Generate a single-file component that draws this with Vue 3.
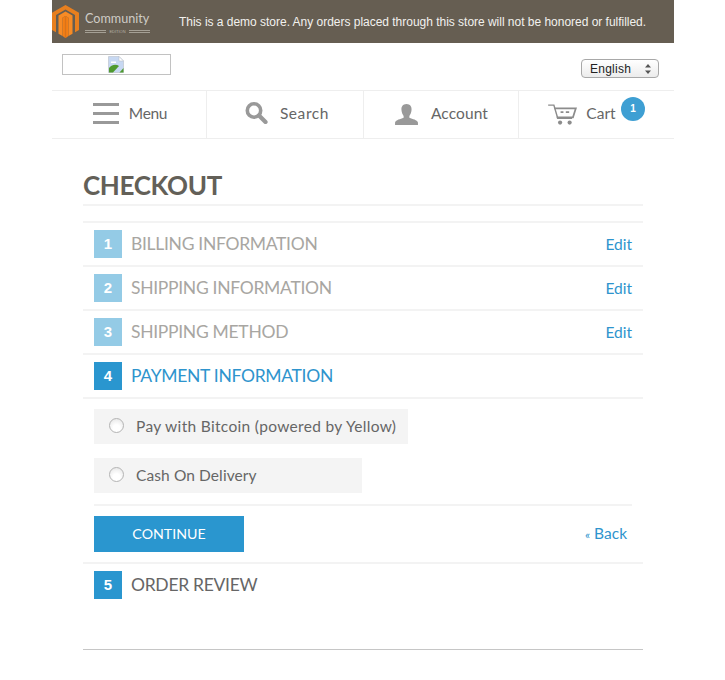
<script setup>
const steps = [
  { n: 1, label: 'BILLING INFORMATION', state: 'done' },
  { n: 2, label: 'SHIPPING INFORMATION', state: 'done' },
  { n: 3, label: 'SHIPPING METHOD', state: 'done' },
  { n: 4, label: 'PAYMENT INFORMATION', state: 'active' }
]
const methods = [
  { label: 'Pay with Bitcoin (powered by Yellow)', cls: 'wide' },
  { label: 'Cash On Delivery', cls: 'narrow' }
]
</script>

<template>
  <div class="page">
    <div class="demo">
      <div class="logo">
        <svg class="mark" width="27" height="33" viewBox="0 0 27 33">
          <path d="M13.500 0 L27 7.800 V25 L23 27.300 V10 L13.500 4.500 L4 10 V27.300 L0 25 V7.800 Z" fill="#e87f1e" />
          <path d="M13.500 6.500 L20.500 10.600 V28.800 L16.500 31 V12.800 L13.500 11 L10.500 12.800 V31 L6.500 28.800 V10.600 Z" fill="#f78b25" />
          <path d="M10.500 12.800 V31 L13.500 33 L16.500 31 V12.800 L13.500 11 Z" fill="#f47f14" />
          <path d="M12.800 11.500 h1.400 V33 h-1.400 Z" fill="#d9731a" />
        </svg>
        <div class="logo-text">
          <div class="community">Community</div>
          <div class="edition"><i></i><span>EDITION</span><i></i></div>
        </div>
      </div>
      <p class="notice">This is a demo store. Any orders placed through this store will not be honored or fulfilled.</p>
    </div>

    <div class="top">
      <div class="broken">
        <svg width="16" height="17" viewBox="0 0 16 17">
          <path d="M.5.5 H11 L15.500 5 V16.500 H.5 Z" fill="#c7d8f2" stroke="#b9bfc9" stroke-width=".6" />
          <path d="M11 .5 V5 H15.500 Z" fill="#fff" stroke="#b9bfc9" stroke-width=".6" />
          <path d="M1 16.500 V12 C4 8.500 8 8 11 10 L5 16.500 Z" fill="#4f9a2f" />
          <path d="M11.500 16.500 L15.500 12 V16.500 Z" fill="#4f9a2f" />
          <path d="M3 5.500 h5 v1.500 h-5 z" fill="#fff" />
        </svg>
      </div>
      <div class="lang">
        <span>English</span>
        <svg width="6" height="10" viewBox="0 0 6 10"><path d="M3 0 L6 3.500 H0 Z M3 10 L0 6.500 H6 Z" fill="#555" /></svg>
      </div>
    </div>

    <nav class="nav">
      <a class="cell c1">
        <span class="burger"><i></i><i></i><i></i></span>
        <span>Menu</span>
      </a>
      <a class="cell c2">
        <svg width="23" height="22" viewBox="0 0 23 22">
          <circle cx="9" cy="8.500" r="6.700" fill="none" stroke="#999" stroke-width="3.600" />
          <path d="M14 13.500 L20.500 20" stroke="#999" stroke-width="4.200" stroke-linecap="round" />
        </svg>
        <span>Search</span>
      </a>
      <a class="cell c3">
        <svg class="person" width="25" height="21" viewBox="0 0 25 22">
          <path d="M12.500 0 C16.500 0 18 3 17.800 6 C17.600 9 16.500 11 15.500 12.500 V14.500 C19 16 23.500 16.500 24.500 19.500 V22 H.5 V19.500 C1.500 16.500 6 16 9.500 14.500 V12.500 C8.500 11 7.400 9 7.200 6 C7 3 8.500 0 12.500 0 Z" fill="#999" />
        </svg>
        <span>Account</span>
      </a>
      <a class="cell c4">
        <svg class="cart" width="30" height="21" viewBox="0 0 30 22">
          <path d="M.5 1.200 H6.500 L10.500 15 H25.500" fill="none" stroke="#8c8c8c" stroke-width="1.500" />
          <path d="M7 4.500 H29.500 L26.500 14 H9.500" fill="none" stroke="#8c8c8c" stroke-width="1.800" />
          <path d="M13.500 8.500 h3 M19 8.500 h3.500" stroke="#8c8c8c" stroke-width="1.800" />
          <circle cx="13" cy="19.500" r="2.200" fill="#8c8c8c" />
          <circle cx="23" cy="19.500" r="2.200" fill="#8c8c8c" />
        </svg>
        <span>Cart</span>
        <b class="count">1</b>
      </a>
    </nav>

    <main class="main">
      <h1 class="title">CHECKOUT</h1>
      <ol class="steps">
        <li v-for="s in steps" :key="s.n" class="step" :class="s.state">
          <span class="num">{{ s.n }}</span>
          <span class="label">{{ s.label }}</span>
          <a v-if="s.state === 'done'" class="edit">Edit</a>
        </li>
      </ol>

      <div class="methods">
        <label v-for="m in methods" :key="m.label" class="method" :class="m.cls">
          <span class="radio"></span>
          <span>{{ m.label }}</span>
        </label>
      </div>

      <div class="actions">
        <button class="continue" type="button">CONTINUE</button>
        <a class="back"><small>«</small> Back</a>
      </div>

      <div class="step last">
        <span class="num">5</span>
        <span class="label">ORDER REVIEW</span>
      </div>

      <div class="foot"></div>
    </main>
  </div>
</template>

<style>
html, body { margin: 0; background: #fff; }
</style>

<style scoped>
.page {
  width: 622px;
  margin-left: 52px;
  height: 680px;
  overflow: hidden;
  font-family: Lato, "Open Sans", sans-serif;
  color: #636363;
}
.demo {
  height: 43px;
  background: #665e52;
  display: flex;
  align-items: center;
  color: #f2f1ee;
}
.logo { display: flex; align-items: center; width: 127px; flex: none; }
.mark { flex: none; }
.logo-text { margin-left: 6px; width: 65px; margin-top: 1px; }
.community {
  font: 12.600px/16px Lato, sans-serif;
  color: #cfccc6;
}
.edition {
  display: flex;
  align-items: center;
  gap: 3px;
  font: 4px/5px "Liberation Sans", sans-serif;
  color: #b5b1a8;
  margin-top: 2px;
}
.edition i { flex: 1; height: 3px; border-top: 1px solid #a5a095; border-bottom: 1px solid #a5a095; box-sizing: border-box; }
.notice {
  margin: 0;
  font: 12px/14px "Liberation Sans", Arial, sans-serif;
  letter-spacing: -.02px;
  white-space: nowrap;
}
.top {
  height: 47px;
  box-sizing: border-box;
  padding: 11px 15px 0 10px;
  display: flex;
  justify-content: space-between;
  align-items: flex-start;
}
.broken {
  width: 109px;
  height: 21px;
  border: 1px solid #c2c2c2;
  box-sizing: border-box;
  display: flex;
  justify-content: center;
  padding-top: 1px;
  padding-right: 2px;
}
.lang {
  margin-top: 5px;
  width: 78px;
  height: 19px;
  box-sizing: border-box;
  border: 1px solid #a8a8a8;
  border-radius: 4px;
  background: linear-gradient(#fff, #ececec);
  display: flex;
  align-items: center;
  justify-content: space-between;
  padding: 0 7px 0 8px;
  font: 12px/16px "Liberation Sans", Arial, sans-serif;
  color: #222;
  letter-spacing: .25px;
}
.nav {
  height: 49px;
  box-sizing: border-box;
  display: flex;
  border-top: 1px solid #eeeeee;
  border-bottom: 1px solid #eeeeee;
  font-size: 15.500px;
  color: #666;
}
.cell {
  display: flex;
  align-items: center;
  gap: 12px;
  justify-content: center;
  border-right: 1px solid #eeeeee;
  box-sizing: border-box;
  position: relative;
  padding-bottom: 3px;
}
.c1 { width: 155px; gap: 10px; letter-spacing: -.3px; padding-left: 2px; }
.c2 { width: 157px; letter-spacing: .6px; padding-left: 4px; }
.c3 { width: 155px; letter-spacing: .1px; }
.c4 { flex: 1; border-right: 0; padding-right: 30px; gap: 9px; }
.burger { display: flex; flex-direction: column; gap: 6px; width: 26px; }
.burger i { display: block; height: 3px; background: #999; }
.person, .cart { margin-top: 3px; }
.count {
  position: absolute;
  left: 102px;
  top: 6px;
  width: 24px;
  height: 24px;
  border-radius: 50%;
  background: #3e9fd3;
  color: #fff;
  font: bold 10px/24px "Liberation Sans", Arial, sans-serif;
  text-align: center;
}
.main { padding: 0 31px; }
.title {
  margin: 0;
  height: 67px;
  box-sizing: border-box;
  padding-top: 31px;
  border-bottom: 2px solid #f3f3f3;
  font: bold 26px/30px Lato, sans-serif;
  color: #636058;
  letter-spacing: -.35px;
}
.steps { list-style: none; margin: 15px 0 0; padding: 0; border-top: 2px solid #f3f3f3; }
.step {
  height: 44px;
  box-sizing: border-box;
  border-bottom: 2px solid #f3f3f3;
  padding: 7px 11px 0;
  display: flex;
  align-items: flex-start;
  font-size: 17.500px;
}
.num {
  width: 28px;
  height: 28px;
  flex: none;
  background: #2a96cf;
  color: #fff;
  font: bold 15px/28px "Liberation Sans", Arial, sans-serif;
  text-align: center;
}
.label { margin-left: 9px; line-height: 27px; white-space: nowrap; letter-spacing: -.3px; }
.done .num { background: #94cbe6; }
.done .label { color: #a8a6a2; }
.active .label { color: #2e94cd; }
.edit {
  margin-left: auto;
  font-size: 15.500px;
  line-height: 28px;
  color: #2e94cd;
}
.methods { padding: 10px 11px 0; }
.method {
  display: flex;
  align-items: center;
  height: 35px;
  margin-bottom: 14px;
  background: #f4f4f4;
  font-size: 15.500px;
  color: #666;
  padding: 0 0 2px 15px;
  box-sizing: border-box;
}
.method.narrow { margin-bottom: 0; }
.wide { width: 314px; letter-spacing: .32px; }
.narrow { width: 268px; letter-spacing: .1px; }
.radio {
  width: 13px;
  height: 13px;
  margin: -1px 12px 0 0;
  border-radius: 50%;
  border: 1px solid #b4b4b4;
  background: radial-gradient(circle at 50% 70%, #fff 30%, #e2e2e2 100%);
  flex: none;
}
.actions {
  margin: 11px 11px 0;
  padding: 10px 5px 0 0;
  border-top: 2px solid #f3f3f3;
  display: flex;
  justify-content: space-between;
  align-items: center;
}
.continue {
  width: 150px;
  height: 36px;
  border: 0;
  padding: 0;
  background: #2a96cf;
  color: #fff;
  font: 14.200px/36px Lato, sans-serif;
}
.back { color: #2e94cd; font-size: 15.500px; padding-bottom: 2px; }
.back small { font-size: 12px; }
.last {
  margin-top: 10px;
  border-top: 2px solid #f3f3f3;
  border-bottom: 0;
}
.last .label { color: #666; }
.foot { margin-top: 43px; border-top: 1px solid #c6c6c6; }
</style>
